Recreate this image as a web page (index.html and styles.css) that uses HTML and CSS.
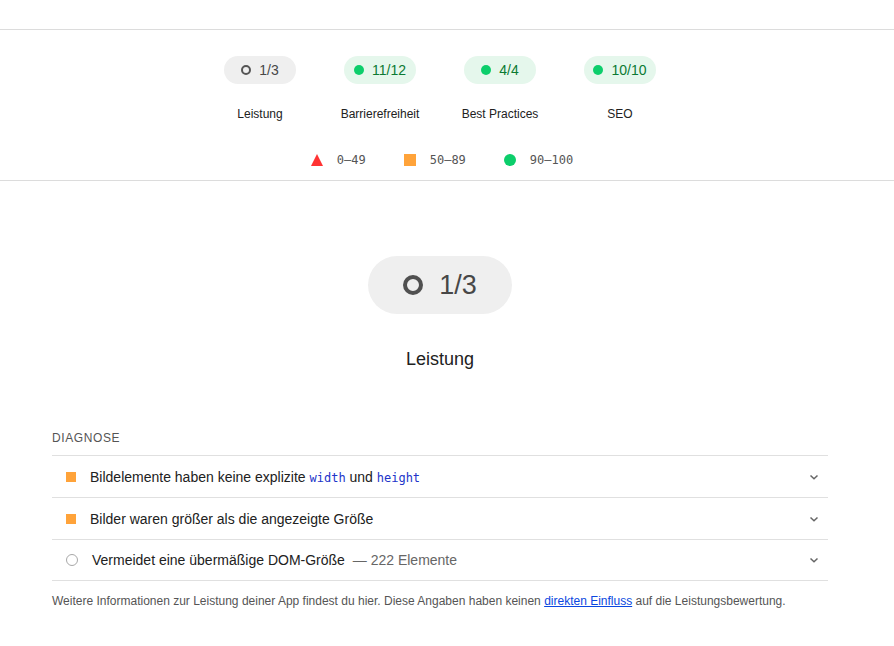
FILE: index.html
```html
<!DOCTYPE html>
<html lang="de">
<head>
<meta charset="utf-8">
<link rel="stylesheet" href="styles.css">
</head>
<body>
<div class="topbar"></div>
<section class="summary">
  <div class="gauges">
    <div class="gauge">
      <span class="pill pill-gray"><span class="ring"></span>1/3</span>
      <span class="glabel">Leistung</span>
    </div>
    <div class="gauge">
      <span class="pill pill-green"><span class="dot"></span>11/12</span>
      <span class="glabel">Barrierefreiheit</span>
    </div>
    <div class="gauge">
      <span class="pill pill-green"><span class="dot"></span>4/4</span>
      <span class="glabel">Best Practices</span>
    </div>
    <div class="gauge">
      <span class="pill pill-green"><span class="dot"></span>10/10</span>
      <span class="glabel">SEO</span>
    </div>
  </div>
  <div class="legend">
    <span class="litem"><svg class="tri" width="12" height="12" viewBox="0 0 12 12"><polygon points="6,0 12,12 0,12" fill="#ff3333"/></svg>0–49</span>
    <span class="litem"><span class="sq"></span>50–89</span>
    <span class="litem"><span class="circ"></span>90–100</span>
  </div>
</section>
<section class="detail">
  <div class="bigpill"><span class="bigring"></span>1/3</div>
  <h2 class="title">Leistung</h2>
  <div class="diag">
    <div class="diag-head">DIAGNOSE</div>
    <div class="row">
      <span class="sq-icon"></span>
      <span class="rtext">Bildelemente haben keine explizite <code>width</code> und <code>height</code></span>
      <svg class="chev" width="12" height="12" viewBox="0 0 12 12"><path d="M2.5 4.5 L6 7.8 L9.5 4.5" fill="none" stroke="#666" stroke-width="1.5"/></svg>
    </div>
    <div class="row">
      <span class="sq-icon"></span>
      <span class="rtext">Bilder waren größer als die angezeigte Größe</span>
      <svg class="chev" width="12" height="12" viewBox="0 0 12 12"><path d="M2.5 4.5 L6 7.8 L9.5 4.5" fill="none" stroke="#666" stroke-width="1.5"/></svg>
    </div>
    <div class="row">
      <span class="ring-icon"></span>
      <span class="rtext rtext-info">Vermeidet eine übermäßige DOM-Größe <span class="extra">— 222 Elemente</span></span>
      <svg class="chev" width="12" height="12" viewBox="0 0 12 12"><path d="M2.5 4.5 L6 7.8 L9.5 4.5" fill="none" stroke="#666" stroke-width="1.5"/></svg>
    </div>
    <p class="note">Weitere Informationen zur Leistung deiner App findest du hier. Diese Angaben haben keinen <a href="#">direkten Einfluss</a> auf die Leistungsbewertung.</p>
  </div>
</section>
</body>
</html>
```
FILE: styles.css
```css
* { box-sizing: border-box; }
body {
  margin: 0;
  background: #fff;
  font-family: "Liberation Sans", Arial, sans-serif;
  color: #212121;
}
.topbar {
  height: 30px;
  border-bottom: 1px solid #dcdcdc;
}
.summary {
  border-bottom: 1px solid #dcdcdc;
  padding: 26px 14px 0 0;
  height: 151px;
}
.gauges {
  display: flex;
  justify-content: center;
}
.gauge {
  width: 120px;
  display: flex;
  flex-direction: column;
  align-items: center;
}
.pill {
  width: 72px;
  height: 28px;
  border-radius: 14px;
  display: flex;
  align-items: center;
  justify-content: center;
  gap: 8px;
  font-size: 14px;
}
.pill-gray { background: #efefef; color: #474747; }
.pill-green { background: #e5f7ec; color: #0b7a33; }
.ring {
  width: 10px;
  height: 10px;
  border: 2px solid #555;
  border-radius: 50%;
}
.dot {
  width: 10px;
  height: 10px;
  background: #0cce6b;
  border-radius: 50%;
}
.glabel {
  margin-top: 22px;
  font-size: 12px;
  line-height: 16px;
  color: #212121;
}
.legend {
  margin-top: 31px;
  display: flex;
  justify-content: center;
  gap: 38px;
  font-family: "DejaVu Sans Mono", monospace;
  font-size: 12px;
  color: #555;
  padding-left: 4px;
}
.litem {
  display: flex;
  align-items: center;
  gap: 14px;
}
.sq {
  width: 12px;
  height: 12px;
  background: #ffa33a;
}
.circ {
  width: 12px;
  height: 12px;
  border-radius: 50%;
  background: #0cce6b;
}
.detail {
  padding: 75px 14px 0 0;
  display: flex;
  flex-direction: column;
  align-items: center;
}
.bigpill {
  width: 144px;
  height: 58px;
  border-radius: 29px;
  background: #efefef;
  color: #474747;
  font-size: 27px;
  display: flex;
  align-items: center;
  justify-content: center;
  gap: 16px;
}
.bigring {
  width: 20px;
  height: 20px;
  border: 4px solid #505050;
  border-radius: 50%;
}
.title {
  margin: 34px 0 0;
  font-size: 18px;
  font-weight: normal;
  line-height: 22px;
  color: #212121;
}
.diag {
  align-self: stretch;
  margin: 60px 52px 0 52px;
}
.diag-head {
  font-size: 12px;
  letter-spacing: 0.6px;
  color: #555;
  line-height: 16px;
  padding-bottom: 9px;
}
.row {
  height: 42px;
  border-top: 1px solid #e0e0e0;
  display: flex;
  align-items: center;
  padding: 0 8px 0 14px;
  font-size: 14px;
  color: #212121;
}
.row:nth-of-type(4) { border-bottom: 1px solid #e0e0e0; }
.sq-icon {
  width: 10px;
  height: 10px;
  background: #ffa33a;
  margin-right: 14px;
  flex: none;
}
.ring-icon {
  width: 12px;
  height: 12px;
  border: 1.5px solid #a8a8a8;
  border-radius: 50%;
  margin-right: 14px;
  flex: none;
}
.rtext { flex: 1; }
.extra { color: #666; margin-left: 4px; }
code {
  font-family: "DejaVu Sans Mono", monospace;
  font-size: 12px;
  color: #2134c9;
}
.chev { flex: none; }
.note {
  margin: 13px 0 0;
  font-size: 12px;
  line-height: 15px;
  color: #555;
}
.note a { color: #0a47e0; }
```
